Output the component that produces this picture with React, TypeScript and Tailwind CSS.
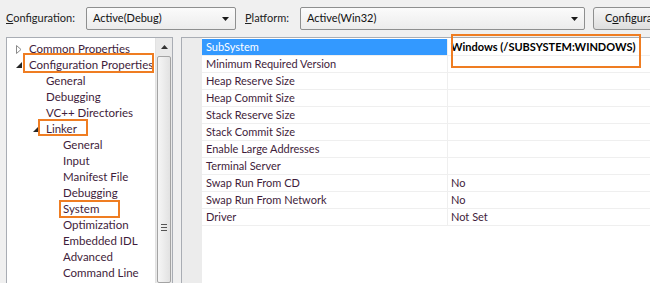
import React from "react";

const treeItems: { label: string; level: number; toggle?: "closed" | "open" }[] = [
  { label: "Common Properties", level: 0, toggle: "closed" },
  { label: "Configuration Properties", level: 0, toggle: "open" },
  { label: "General", level: 1 },
  { label: "Debugging", level: 1 },
  { label: "VC++ Directories", level: 1 },
  { label: "Linker", level: 1, toggle: "open" },
  { label: "General", level: 2 },
  { label: "Input", level: 2 },
  { label: "Manifest File", level: 2 },
  { label: "Debugging", level: 2 },
  { label: "System", level: 2 },
  { label: "Optimization", level: 2 },
  { label: "Embedded IDL", level: 2 },
  { label: "Advanced", level: 2 },
  { label: "Command Line", level: 2 },
];

const props: [string, string][] = [
  ["SubSystem", "Windows (/SUBSYSTEM:WINDOWS)"],
  ["Minimum Required Version", ""],
  ["Heap Reserve Size", ""],
  ["Heap Commit Size", ""],
  ["Stack Reserve Size", ""],
  ["Stack Commit Size", ""],
  ["Enable Large Addresses", ""],
  ["Terminal Server", ""],
  ["Swap Run From CD", "No"],
  ["Swap Run From Network", "No"],
  ["Driver", "Not Set"],
];

function DropArrow() {
  return (
    <svg width="7" height="4" viewBox="0 0 7 4">
      <polygon points="0,0 7,0 3.5,4" fill="#1a1a1a" />
    </svg>
  );
}

function Combo({ value, width }: { value: string; width: string }) {
  return (
    <div
      className={`${width} shrink-0 h-[23px] flex items-center justify-between pl-[6px] pr-[6px] rounded-[2px] border border-[#8e8f8f] bg-linear-to-b from-[#fbfbfb] to-[#ececec] text-[#111]`}
    >
      <span>{value}</span>
      <DropArrow />
    </div>
  );
}

function Toggle({ kind }: { kind?: "closed" | "open" }) {
  if (kind === "closed") {
    return (
      <svg width="6" height="9" viewBox="0 0 6 9">
        <polygon points="0.5,0.5 5,4.5 0.5,8.5" fill="#fff" stroke="#8a8a8a" />
      </svg>
    );
  }
  if (kind === "open") {
    return (
      <svg width="6" height="6" viewBox="0 0 6 6">
        <polygon points="6,0 6,6 0,6" fill="#262626" />
      </svg>
    );
  }
  return null;
}

export default function App() {
  return (
    <div className="relative w-[650px] h-[283px] overflow-hidden bg-[#f0f0f0] text-[11px] font-['Segoe_UI','Lato',sans-serif]">
      {/* toolbar */}
      <div className="flex items-center h-[37px] pl-[6px] whitespace-nowrap">
        <span className="shrink-0 text-[#222] w-[80px]">
          <span className="underline">C</span>onfiguration:
        </span>
        <Combo value="Active(Debug)" width="w-[150px]" />
        <span className="shrink-0 text-[#222] ml-[9px] w-[55px]">
          <span className="underline">P</span>latform:
        </span>
        <Combo value="Active(Win32)" width="w-[285px]" />
        <div className="shrink-0 ml-[8px] h-[23px] w-[120px] flex items-center pl-[11px] rounded-[3px] border border-[#8e8f8f] bg-linear-to-b from-[#f6f6f6] to-[#dedede] text-[#111]">
          C<span className="underline">o</span>nfiguration Manager...
        </div>
      </div>

      <div className="flex h-[246px]">
        {/* tree */}
        <div className="relative ml-[6px] w-[167px] h-full flex border border-b-0 border-[#a9adb4] bg-white">
          <div className="flex-1 pt-[3px] text-[11.5px] text-[#3f1d3b]">
            {treeItems.map((it, i) => (
              <div key={i} className="flex items-center h-[16px] whitespace-nowrap">
                <div style={{ width: 9 + it.level * 17 }} />
                <div className="w-[13px] flex items-center">
                  <Toggle kind={it.toggle} />
                </div>
                <span>{it.label}</span>
              </div>
            ))}
          </div>
          <div className="w-[17px] flex flex-col bg-[#e9e9e9] border-l border-[#e2e2e2]">
            <div className="h-[17px] flex items-center justify-center">
              <svg width="7" height="4" viewBox="0 0 7 4">
                <polygon points="0,4 7,4 3.5,0" fill="#333" />
              </svg>
            </div>
            <div className="flex-1 mx-[1px] mt-[1px] flex flex-col items-center pt-[167px] rounded-[2px] border border-[#a4a4a4] bg-linear-to-r from-[#f6f6f6] to-[#e2e2e2]">
              <div className="w-[6px] flex flex-col gap-[2px]">
                <div className="h-[1px] bg-[#555]" />
                <div className="h-[1px] bg-[#555]" />
                <div className="h-[1px] bg-[#555]" />
              </div>
            </div>
          </div>
          {/* highlight boxes */}
          <div className="absolute left-[16px] top-[15px] w-[131px] h-[20px] border-2 border-[#ef7d22]" />
          <div className="absolute left-[31px] top-[81px] w-[50px] h-[17px] border-2 border-[#ef7d22]" />
          <div className="absolute left-[52px] top-[162px] w-[61px] h-[18px] border-2 border-[#ef7d22]" />
        </div>

        {/* property grid */}
        <div className="ml-[8px] flex-1 h-full flex border-l border-t border-[#a9adb4] bg-white">
          <div className="w-[20px] bg-[#ececec]" />
          <div className="flex-1 pt-[1px] text-[#3f1d3b]">
            {props.map(([name, value], i) => (
              <div key={i} className="flex h-[17px] border-b border-[#efefef]">
                <div
                  className={`w-[246px] pl-[4px] leading-[16px] border-r border-[#efefef] ${
                    i === 0 ? "bg-[#3399ff] text-white" : ""
                  }`}
                >
                  {name}
                </div>
                <div className={`flex-1 pl-[3px] leading-[16px] whitespace-nowrap ${i === 0 ? "font-bold text-black" : ""}`}>
                  {value}
                </div>
              </div>
            ))}
          </div>
        </div>
      </div>

      <div className="absolute left-[451px] top-[34px] w-[190px] h-[34px] border-2 border-[#ef7d22]" />
    </div>
  );
}
